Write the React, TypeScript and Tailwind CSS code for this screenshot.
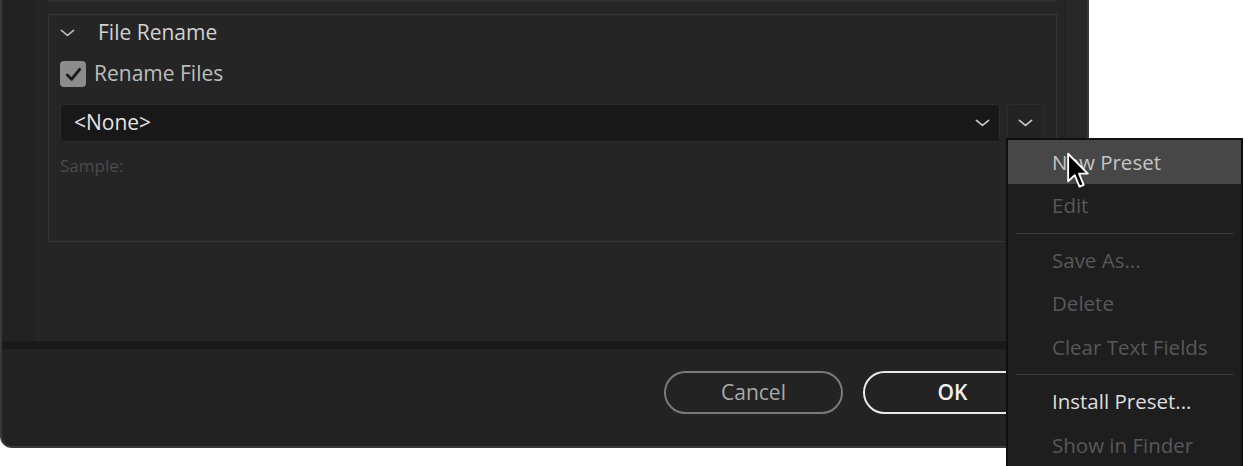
import React from "react";

const font = { fontFamily: '"Open Sans", "Noto Sans", sans-serif' };

function Chevron({ className }: { className?: string }) {
  return (
    <svg viewBox="0 0 16 8" className={className} fill="none">
      <path d="M1.5 1.2 L8 6.6 L14.5 1.2" stroke="currentColor" strokeWidth="1.8" strokeLinecap="round" strokeLinejoin="round" />
    </svg>
  );
}

function Cursor() {
  return (
    <svg viewBox="0 0 14 22" className="absolute left-[1066px] top-[152px] w-[25px] h-[38px]">
      <path
        d="M1 1 L1 17 L4.8 13.4 L7.6 20 L10 19 L7.3 12.5 L12.4 12.5 Z"
        fill="#000"
        stroke="#fff"
        strokeWidth="1.1"
        strokeLinejoin="round"
      />
    </svg>
  );
}

function MenuItem({ label, tone }: { label: string; tone: "hover" | "on" | "off" }) {
  const cls =
    tone === "hover"
      ? "h-[44px] bg-[#474747] text-[#c4c4c4]"
      : tone === "on"
        ? "h-[43.5px] text-[#dedede]"
        : "h-[43.5px] text-[#585858]";
  return (
    <div className={`flex items-center pl-[44px] text-[20.5px] ${cls}`}>{label}</div>
  );
}

function Sep() {
  return <div className="h-px bg-[#383838] mx-[7px] my-[5px]" />;
}

export default function App() {
  return (
    <div className="relative w-[1245px] h-[466px] bg-white overflow-hidden" style={font}>
      {/* dialog */}
      <div className="w-[1089px] h-[448px] bg-[#222222] border-x-2 border-b-2 border-[#3a3a3a] rounded-b-[12px] flex flex-col overflow-hidden">
        <div className="h-[341px] flex">
          <div className="w-[34px] bg-[#222222]" />
          <div className="w-[1030px] bg-[#252525] pl-[12px] pr-[9px]">
            <div className="h-[2px] bg-[#2e2e2e]" />
            <div className="mt-[12px] h-[228px] border border-[#363636] pl-[11px]">
              <div className="h-[34px] flex items-center mt-[1px]">
                <Chevron className="w-[15px] h-[8px] text-[#b8b8b8]" />
                <span className="ml-[23px] text-[21px] font-medium text-[#d2d2d2]">File Rename</span>
              </div>
              <div className="h-[40px] flex items-center mt-[4px]">
                <div className="w-[26px] h-[26px] rounded-[4px] bg-[#8c8c8c] flex items-center justify-center">
                  <svg viewBox="0 0 20 20" className="w-[19px] h-[19px]" fill="none">
                    <path d="M3.5 10.5 L8 15 L16.5 4.5" stroke="#1c1c1c" strokeWidth="3" strokeLinecap="round" strokeLinejoin="round" />
                  </svg>
                </div>
                <span className="ml-[8px] text-[21px] text-[#bdbdbd]">Rename Files</span>
              </div>
              <div className="flex mt-[10px]">
                <div className="w-[940px] h-[38px] rounded-[4px] bg-[#181818] border border-[#2c2c2c] flex items-center pl-[13px] pr-[9px]">
                  <span className="text-[21px] text-[#e4e4e4]">&lt;None&gt;</span>
                  <Chevron className="ml-auto w-[15px] h-[8px] text-[#c8c8c8]" />
                </div>
                <div className="ml-[7px] w-[37px] h-[37px] rounded-[4px] bg-[#232323] border border-[#2e2e2e] flex items-center justify-center">
                  <Chevron className="w-[15px] h-[8px] text-[#c8c8c8]" />
                </div>
              </div>
              <div className="mt-[11px] text-[17px] text-[#4b4b4b]">Sample:</div>
            </div>
          </div>
          <div className="flex-1 bg-[#272727]" />
        </div>
        <div className="h-[8px] bg-[#1a1a1a]" />
        <div className="flex-1 bg-[#232323] flex justify-end items-start pt-[22px] pr-[45px] gap-[20px]">
          <button className="w-[179px] h-[43px] rounded-full border-2 border-[#7a7a7a] text-[21px] text-[#a9a9a9]">
            Cancel
          </button>
          <button className="w-[179px] h-[43px] rounded-full border-2 border-[#e8e8e8] text-[21px] font-semibold text-[#f0f0f0]">
            OK
          </button>
        </div>
      </div>

      {/* preset menu */}
      <div className="absolute left-[1006px] top-[138px] w-[237px] h-[360px] bg-[#1e1e1e] border-2 border-[#0f0f0f]">
        <MenuItem label="New Preset" tone="hover" />
        <MenuItem label="Edit" tone="off" />
        <Sep />
        <MenuItem label="Save As..." tone="off" />
        <MenuItem label="Delete" tone="off" />
        <MenuItem label="Clear Text Fields" tone="off" />
        <Sep />
        <MenuItem label="Install Preset..." tone="on" />
        <MenuItem label="Show in Finder" tone="off" />
      </div>
      <Cursor />
    </div>
  );
}
